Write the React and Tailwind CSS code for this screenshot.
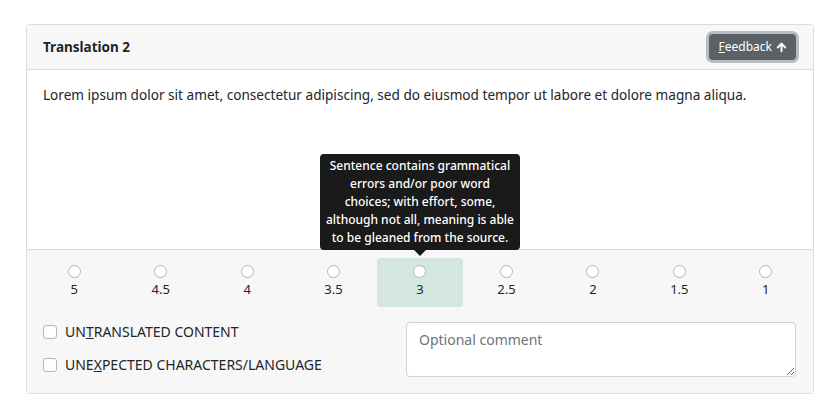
import { ArrowUp } from "lucide-react";

const scores = ["5", "4.5", "4", "3.5", "3", "2.5", "2", "1.5", "1"];

export default function App() {
  const selected = "3";
  return (
    <div className="w-[840px] h-[420px] bg-white pt-[24px] px-[26px] font-['Noto_Sans',sans-serif] text-[#212529]">
      <div className="w-[788px] border border-[#dcdcdc] rounded-[4px] overflow-hidden">
        {/* header */}
        <div className="h-[45px] bg-[#f7f7f7] border-b border-[#dcdcdc] flex items-center justify-between pl-[16px] pr-[17px]">
          <span className="text-[13.5px] font-bold">Translation 2</span>
          <button className="h-[26px] pl-[10px] pr-[8px] bg-[#5a6268] text-white text-[12px] rounded-[4px] flex items-center gap-[3px] ring-[3px] ring-[#b8bcc0]">
            <span><span className="underline">F</span>eedback</span>
            <ArrowUp size={13} strokeWidth={3.5} />
          </button>
        </div>

        {/* body */}
        <div className="h-[179px] bg-white px-[16px] pt-[15px] text-[13.6px]">
          Lorem ipsum dolor sit amet, consectetur adipiscing, sed do eiusmod tempor ut labore et dolore magna aliqua.
        </div>

        {/* footer */}
        <div className="bg-[#f7f7f7] border-t border-[#dcdcdc] px-[4px] pt-[8px] pb-[16px]">
          <div className="grid grid-cols-9">
            {scores.map((s) => (
              <div
                key={s}
                className={
                  "relative h-[49px] flex flex-col items-center pt-[7px] rounded-[4px] " +
                  (s === selected ? "bg-[#d3e7df]" : "")
                }
              >
                {s === selected && (
                  <div className="absolute bottom-[57px] left-1/2 -translate-x-1/2 w-[200px] bg-[#1a1a1a] text-white text-[12px] font-medium leading-[18px] text-center rounded-[4px] px-[4px] py-[3px] z-10 whitespace-nowrap">
                    Sentence contains grammatical<br />
                    errors and/or poor word<br />
                    choices; with effort, some,<br />
                    although not all, meaning is able<br />
                    to be gleaned from the source.
                    <div className="absolute left-1/2 -translate-x-1/2 -bottom-[6px] w-0 h-0 border-l-[6px] border-r-[6px] border-t-[6px] border-l-transparent border-r-transparent border-t-[#1a1a1a]" />
                  </div>
                )}
                <span className="w-[13px] h-[13px] rounded-full border border-[#b5b5b5] bg-white" />
                <span className="text-[13px] leading-[18px] mt-[2px]">{s}</span>
              </div>
            ))}
          </div>

          <div className="flex mt-[15px] pl-[12px] pr-[12px]">
            <div className="flex flex-col gap-[13px] w-[363px]">
              <label className="flex items-center gap-[8px] text-[14px] leading-[20px]">
                <span className="w-[14px] h-[14px] rounded-[3px] border border-[#b5b5b5] bg-white" />
                <span>UN<span className="underline">T</span>RANSLATED CONTENT</span>
              </label>
              <label className="flex items-center gap-[8px] text-[14px] leading-[20px]">
                <span className="w-[14px] h-[14px] rounded-[3px] border border-[#b5b5b5] bg-white" />
                <span>UNE<span className="underline">X</span>PECTED CHARACTERS/LANGUAGE</span>
              </label>
            </div>
            <textarea
              placeholder="Optional comment"
              className="w-[390px] h-[55px] border border-[#ced4da] rounded-[4px] bg-white px-[12px] py-[6px] text-[14px] placeholder:text-[#6c757d] outline-none"
            />
          </div>
        </div>
      </div>
    </div>
  );
}
